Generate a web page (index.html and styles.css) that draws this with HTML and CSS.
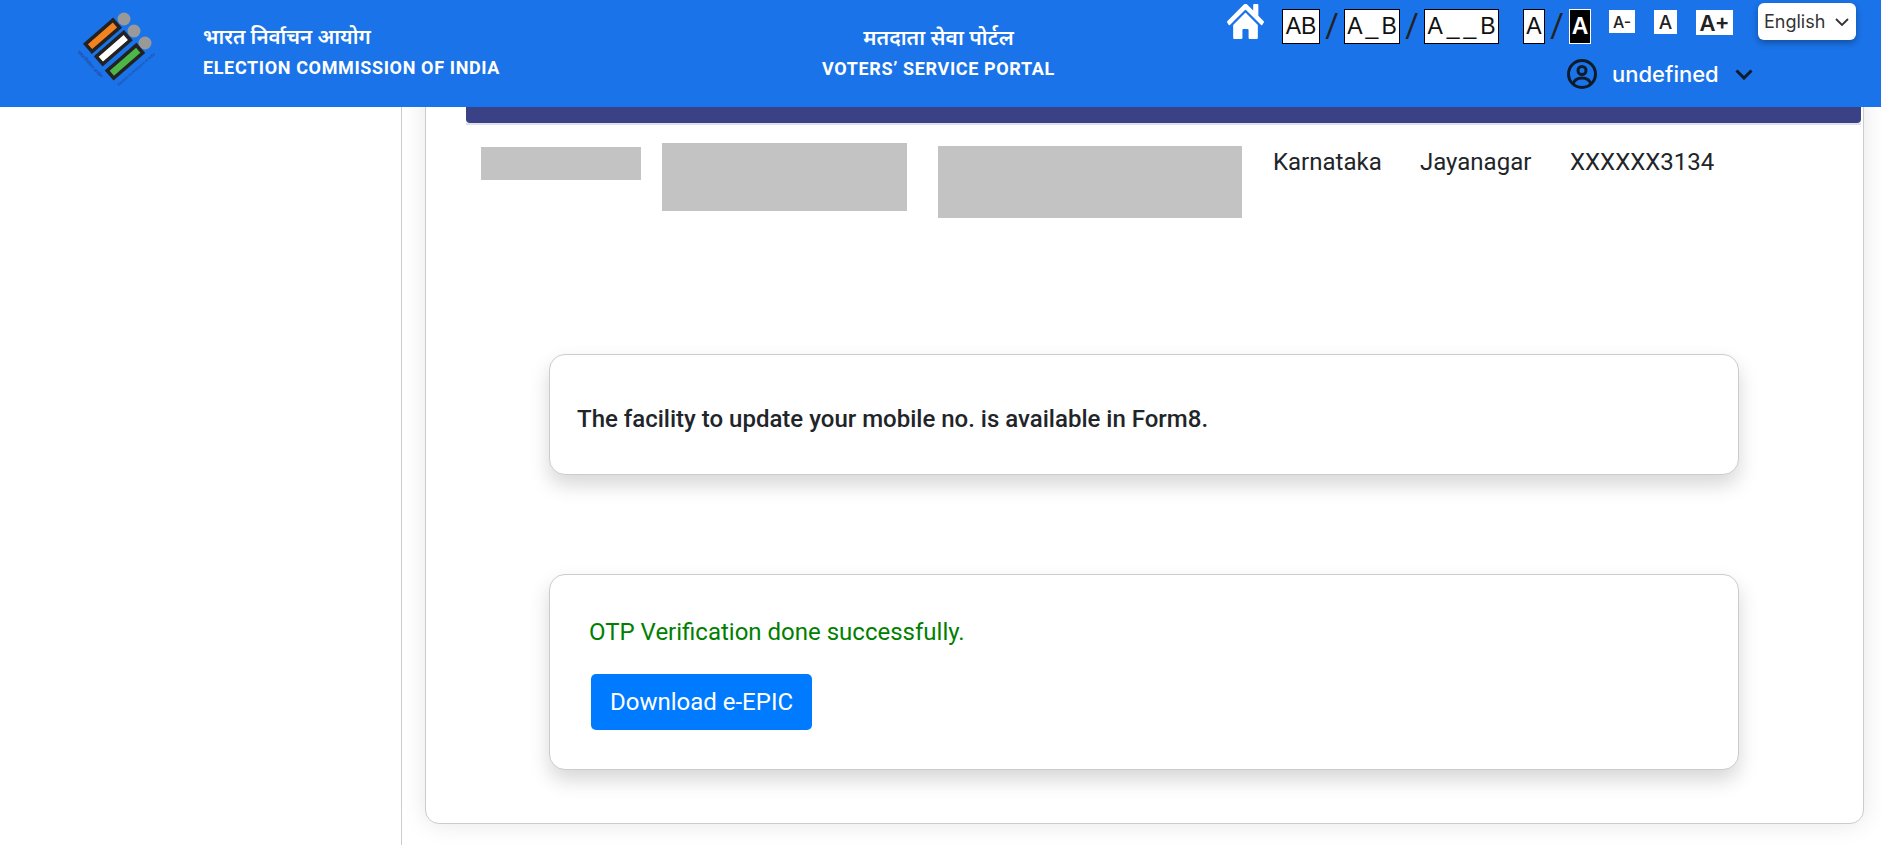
FILE: index.html
```html
<!DOCTYPE html>
<html lang="en">
    <head>
        <meta charset="UTF-8">
        <title>Voters' Service Portal</title>
        <link rel="stylesheet" href="styles.css">
    </head>
    <body>
        <header class="topbar">
            <div class="brand">
                <svg class="logo" viewBox="0 0 90 80" width="90" height="80">
                    <circle cx="50" cy="10" r="6.500" fill="#999"/>
                    <circle cx="60" cy="22" r="6.500" fill="#999"/>
                    <circle cx="71" cy="34" r="6.500" fill="#999"/>
                    <rect x="10.250" y="21.800" width="36.500" height="10" transform="rotate(-41 28.500 26.800)" fill="#f58220" stroke="#222" stroke-width="3.500"/>
                    <rect x="21.050" y="34.300" width="36.500" height="10" transform="rotate(-41 39.300 39.300)" fill="#fff" stroke="#222" stroke-width="3.500"/>
                    <rect x="31.750" y="47.700" width="38.500" height="10" transform="rotate(-41 51 52.700)" fill="#4cb648" stroke="#222" stroke-width="3.500"/>
                    <text class="logo-text" transform="translate(3 43) rotate(48)">भारत निर्वाचन आयोग</text>
                    <text class="logo-text logo-text-en" transform="translate(45 77) rotate(-41)">Election Commission of India</text>
                </svg>
                <div class="brand-name">
                    <div class="hindi hindi-brand">भारत निर्वाचन आयोग</div>
                    <div class="english">ELECTION COMMISSION OF INDIA</div>
                </div>
            </div>
            <div class="portal-name">
                <div class="hindi">मतदाता सेवा पोर्टल</div>
                <div class="english">VOTERS’ SERVICE PORTAL</div>
            </div>
            <div class="tools">
                <div class="tools-row">
                    <svg class="home" viewBox="0 32 576 448" width="37" height="35" preserveAspectRatio="none"><path fill="#fff" d="M280.400 148.300 96 300.100V464a16 16 0 0 0 16 16l112-.3a16 16 0 0 0 15.900-16V368a16 16 0 0 1 16-16h64a16 16 0 0 1 16 16v95.600a16 16 0 0 0 16 16.100l112 .3a16 16 0 0 0 16-16V300L295.700 148.300a12.200 12.200 0 0 0-15.300 0zM571.600 251.500 488 182.600V44.100a12 12 0 0 0-12-12h-56a12 12 0 0 0-12 12v72.600L318.500 43a48 48 0 0 0-61 0L4.300 251.500a12 12 0 0 0-1.600 16.900l25.500 31A12 12 0 0 0 45.200 301l235.200-193.700a12.200 12.200 0 0 1 15.300 0L530.900 301a12 12 0 0 0 16.900-1.600l25.500-31a12 12 0 0 0-1.700-17z"/></svg>
                    <span class="box box-ab">AB</span>
                    <span class="slash">/</span>
                    <span class="box box-a-b">A_B</span>
                    <span class="slash">/</span>
                    <span class="box box-a--b">A__B</span>
                    <span class="box box-a">A</span>
                    <span class="slash">/</span>
                    <span class="box box-dark">A</span>
                    <span class="size size-small">A-</span>
                    <span class="size size-mid">A</span>
                    <span class="size size-big">A+</span>
                    <div class="lang">
                        English
                        <svg viewBox="0 0 14 8" width="14" height="8"><path d="M1 1l6 6 6-6" fill="none" stroke="#333" stroke-width="1.800"/></svg>
                    </div>
                </div>
                <div class="user-row">
                    <svg viewBox="0 0 30 30" width="30" height="30" fill="none" stroke="#0d1b2a" stroke-width="3">
                        <circle cx="15" cy="15" r="13.500"/>
                        <circle cx="15" cy="11.500" r="4"/>
                        <path d="M6 25c1.500-4.500 5-6 9-6s7.500 1.500 9 6"/>
                    </svg>
                    <span class="user-name">undefined</span>
                    <svg viewBox="0 0 18 11" width="18" height="11"><path d="M1.500 1.500 9 9l7.500-7.500" fill="none" stroke="#0d1b2a" stroke-width="3"/></svg>
                </div>
            </div>
        </header>
        <main class="page">
            <aside class="sidebar"></aside>
            <section class="panel">
                <div class="table-head">
                    <div class="table-head-bar"></div>
                </div>
                <div class="table-row">
                    <div class="mask mask-1"></div>
                    <div class="mask mask-2"></div>
                    <div class="mask mask-3"></div>
                    <div class="cell">Karnataka</div>
                    <div class="cell">Jayanagar</div>
                    <div class="cell">XXXXXX3134</div>
                </div>
                <div class="card card-notice">
                    <p class="notice">The facility to update your mobile no. is available in Form8.</p>
                </div>
                <div class="card card-otp">
                    <p class="success">OTP Verification done successfully.</p>
                    <button class="download" type="button">Download e-EPIC</button>
                </div>
            </section>
        </main>
    </body>
</html>
```

FILE: styles.css
```css
* {
    box-sizing: border-box;
}

body {
    margin: 0;
    height: 845px;
    overflow: hidden;
    background: #fff;
    font-family: Roboto, "Noto Sans", sans-serif;
    color: #212529;
}

.topbar {
    position: relative;
    z-index: 2;
    display: flex;
    height: 107px;
    background: #1a73e8;
    color: #fff;
}

.brand {
    display: flex;
    width: 822px;
    padding: 9px 0 0 74px;
}

.logo {
    flex: none;
}

.logo-text {
    font-size: 4.600px;
    fill: #2b3a8c;
}

.logo-text-en {
    font-size: 3.700px;
}

.brand-name {
    margin-left: 39px;
    padding-top: 14px;
}

.portal-name {
    width: 233px;
    padding-top: 24px;
    text-align: center;
}

.hindi {
    height: 26px;
    font-family: "Noto Sans", Roboto, sans-serif;
    font-size: 21px;
    font-weight: 600;
    line-height: 26px;
}

.hindi-brand {
    font-size: 20.500px;
}

.english {
    margin-top: 8px;
    font-size: 18px;
    font-weight: 700;
    letter-spacing: 0.630px;
    line-height: 22px;
    white-space: nowrap;
}

.tools {
    margin-left: 172px;
    padding-top: 3px;
}

.tools-row {
    display: flex;
    align-items: flex-start;
}

.home {
    flex: none;
    margin: 1px 18px 0 0;
}

.box {
    display: flex;
    justify-content: center;
    align-items: center;
    height: 35px;
    margin-top: 6px;
    background: #fff;
    border: 1px solid #000;
    font-family: "Liberation Sans", sans-serif;
    font-size: 23px;
    color: #111;
}

.box-ab { width: 38px; }
.box-a-b { width: 56px; padding-left: 3px; letter-spacing: 3px; }
.box-a--b { width: 75px; margin-right: 24px; padding-left: 4px; letter-spacing: 4px; }
.box-a { width: 22px; }

.box-dark {
    width: 22px;
    background: #000;
    border-color: #fff;
    color: #fff;
    font-weight: 700;
}

.slash {
    width: 24px;
    margin-top: 4px;
    font-size: 33px;
    line-height: 38px;
    text-align: center;
    color: #222;
}

.size {
    display: flex;
    justify-content: center;
    align-items: center;
    margin-top: 7px;
    background: #fff;
    font-family: Inter, sans-serif;
    font-weight: 500;
    color: #222;
}

.size-small { width: 26px; height: 23px; margin-left: 18px; font-size: 16px; }
.size-mid { width: 23px; height: 24px; margin-left: 19px; font-size: 19px; }
.size-big { width: 37px; height: 25px; margin-left: 19px; font-size: 22px; font-weight: 600; }

.lang {
    display: flex;
    align-items: center;
    justify-content: space-between;
    width: 98px;
    height: 37px;
    margin-left: 25px;
    padding: 0 7px 0 6px;
    background: #fff;
    border-radius: 6px;
    box-shadow: 0 3px 6px rgba(0, 0, 0, 0.3);
    font-family: Inter, sans-serif;
    font-size: 18px;
    color: #333;
}

.user-row {
    display: flex;
    align-items: center;
    margin: 14px 0 0 340px;
    color: #fff;
}

.user-name {
    margin: 0 16px 0 15px;
    font-family: Inter, sans-serif;
    font-size: 22px;
    font-weight: 500;
    line-height: 30px;
}

.page {
    display: flex;
    height: 738px;
}

.sidebar {
    flex: none;
    width: 402px;
    background: #fff;
    border-right: 1px solid #ccc;
}

.panel {
    width: 1439px;
    height: 737px;
    margin: -20px 0 0 23px;
    padding: 19px 2px 0 40px;
    background: #fff;
    border: 1px solid #ccc;
    border-radius: 14px;
    box-shadow: 0 0 24px rgba(0, 0, 0, 0.1);
}

.table-head {
    border-bottom: 2px solid #dee2e6;
}

.table-head-bar {
    height: 16px;
    background: #3a4185;
    border-radius: 0 0 4px 4px;
}

.table-row {
    display: grid;
    grid-template-columns: 181px 276px 335px 147px 150px auto;
    height: 229px;
    padding-left: 15px;
    font-size: 24px;
    line-height: 30px;
}

.mask {
    background: #c3c3c3;
}

.mask-1 { width: 160px; height: 33px; margin-top: 22px; }
.mask-2 { width: 245px; height: 68px; margin-top: 18px; }
.mask-3 { width: 304px; height: 72px; margin-top: 21px; }

.cell {
    margin-top: 22px;
}

.card {
    width: 1190px;
    margin-left: 83px;
    background: #fff;
    border: 1px solid #ccc;
    border-radius: 16px;
    box-shadow: 0 10px 20px rgba(0, 0, 0, 0.16);
}

.card-notice {
    height: 121px;
    padding: 49px 0 0 27px;
}

.card-otp {
    height: 196px;
    margin-top: 99px;
    padding: 42px 0 0 39px;
}

.notice {
    margin: 0;
    font-size: 24px;
    font-weight: 500;
    line-height: 30px;
}

.success {
    margin: 0;
    font-size: 24px;
    line-height: 30px;
    color: #008000;
}

.download {
    display: block;
    width: 221px;
    height: 56px;
    margin: 27px 0 0 2px;
    padding: 0;
    background: #007bff;
    border: none;
    border-radius: 5px;
    font-family: Roboto, sans-serif;
    font-size: 24px;
    color: #fff;
}
```
